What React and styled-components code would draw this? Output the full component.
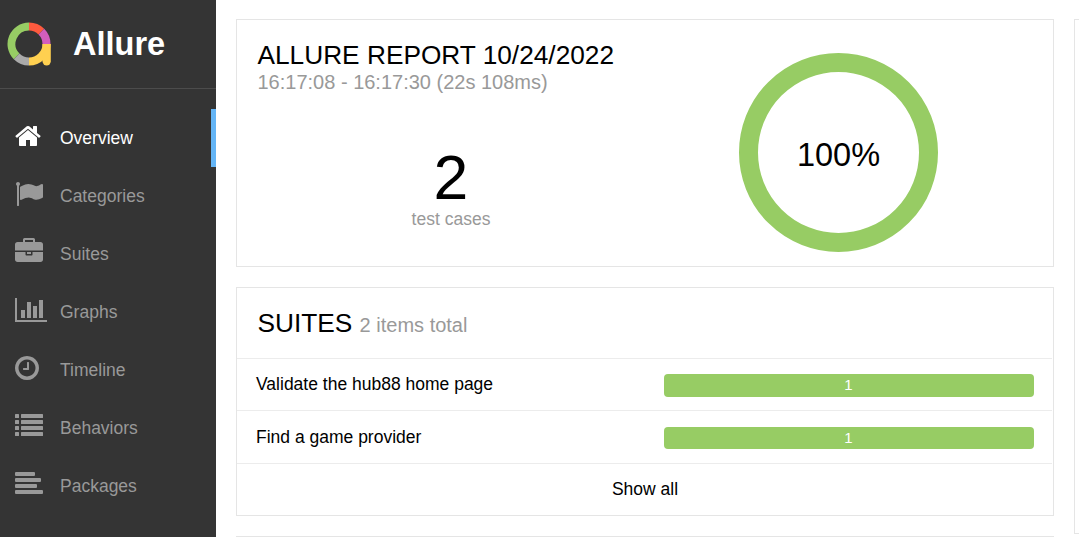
import React from "react";
import styled, { createGlobalStyle } from "styled-components";

const GlobalStyle = createGlobalStyle`
  * { box-sizing: border-box; }
  body {
    margin: 0;
    overflow: hidden;
    background: #fff;
    color: #000;
    font: 17.5px/26px "Liberation Sans", Arial, sans-serif;
  }
`;

const Page = styled.div`
  display: flex;
  height: 537px;
  overflow: hidden;
`;

const Sidebar = styled.aside`
  flex: 0 0 216px;
  background: #343434;
`;

const Brand = styled.div`
  display: flex;
  align-items: center;
  height: 89px;
  padding-left: 7px;
  border-bottom: 1px solid #4c4c4c;
`;

const BrandName = styled.span`
  margin-left: 21px;
  color: #fff;
  font-size: 32.5px;
  font-weight: bold;
  line-height: 40px;
`;

const Nav = styled.nav`
  padding-top: 20px;
`;

const NavItem = styled.a`
  display: flex;
  height: 58px;
  padding: 13px 0 0 15px;
  color: ${(p) => (p.$active ? "#fff" : "#999")};
  border-right: 5px solid ${(p) => (p.$active ? "#64b5f6" : "transparent")};
`;

const NavIcon = styled.svg`
  flex: none;
  width: 32px;
  height: 28px;
  margin-right: 13px;
  fill: currentColor;
`;

const NavLabel = styled.span`
  padding-top: 3px;
`;

const Content = styled.main`
  flex: 1;
  display: flex;
  gap: 20px;
  padding: 19px 0 0 20px;
`;

const Column = styled.div`
  flex: 0 0 818px;
  display: flex;
  flex-direction: column;
  gap: 20px;
`;

const Card = styled.section`
  flex: none;
  height: ${(p) => p.$height}px;
  border: 1px solid #e5e5e5;
  background: #fff;
`;

const SummaryCard = styled(Card)`
  display: flex;
`;

const SummaryInfo = styled.div`
  width: 428px;
  padding: 20px 0 0 20.5px;
`;

const Title = styled.h2`
  margin: 0;
  font-size: 26.25px;
  font-weight: normal;
  line-height: 30px;
  white-space: nowrap;
`;

const Subtitle = styled.span`
  display: ${(p) => (p.$block ? "block" : "inline")};
  color: #999;
  font-size: 20px;
  line-height: 24px;
`;

const Counter = styled.div`
  margin-top: 49px;
  padding-right: 20.5px;
  text-align: center;
  color: #999;
  line-height: 20px;
`;

const CounterValue = styled.div`
  color: #000;
  font-size: 62.5px;
  line-height: 68px;
  margin-bottom: -2px;
`;

const ChartArea = styled.div`
  padding: 33px 0 0 74px;
`;

const SuitesHead = styled.div`
  height: 69.6px;
  padding: 20px 20.5px 0;
`;

const Row = styled.div`
  display: flex;
  align-items: center;
  justify-content: ${(p) => (p.$centered ? "center" : "space-between")};
  height: 52.5px;
  margin-right: 1px;
  padding: 0 18px 0 19px;
  border-top: 1px solid #ececec;
`;

const Bar = styled.div`
  width: 370px;
  height: 22.5px;
  margin-top: 2px;
  padding-right: 1px;
  border-radius: 4px;
  background: #97cc64;
  color: #fff;
  font-size: 15px;
  line-height: 22px;
  text-align: center;
`;

const SideCard = styled(Card)`
  flex: 0 0 400px;
`;

const Logo = () => (
  <svg width="45" height="45" viewBox="7 22 45 45">
    <g fill="none" strokeWidth="8">
      <path d="M29 26.5A17.5 17.5 0 0 0 16.63 56.37" stroke="#97cc64" />
      <path d="M16.63 56.37A17.5 17.5 0 0 0 29 61.5" stroke="#aaa" />
      <path d="M29 26.5A17.5 17.5 0 0 1 41.37 31.63" stroke="#fd5a3e" />
      <path d="M41.37 31.63A17.5 17.5 0 0 1 46.5 44" stroke="#d35ebe" />
      <path d="M46.5 44A17.5 17.5 0 0 1 29 61.5" stroke="#ffd050" />
    </g>
    <path d="M42.5 44H50.8V61.3a4.1 4.1 0 0 1-8.3 0Z" fill="#ffd050" />
  </svg>
);

const Donut = () => (
  <svg width="199" height="199" viewBox="0 0 199 199">
    <circle cx="99.5" cy="99.5" r="90" fill="none" stroke="#97cc64" strokeWidth="19" />
    <text x="99.5" y="112.5" textAnchor="middle" fontSize="32.5">100%</text>
  </svg>
);

const unit = "scale(0.015625)";

const icons = {
  home: (
    <path transform={`${unit} translate(-64 0)`} d="M1472 992v480q0 26-19 45t-45 19h-384v-384h-256v384h-384q-26 0-45-19t-19-45v-480q0-1 .5-3t.5-3l575-474 575 474q1 2 1 6zm223-69l-62 74q-8 9-21 11h-3q-13 0-21-7l-692-577-692 577q-12 8-24 7-13-2-21-11l-62-74q-8-10-7-23.5t11-21.5l719-599q32-26 76-26t76 26l244 204v-195q0-14 9-23t23-9h192q14 0 23 9t9 23v408l219 182q10 8 11 21.5t-7 23.5z" />
  ),
  flag: (
    <path transform={unit} d="M320 256q0 72-64 110v1266q0 13-9.5 22.5t-22.5 9.5h-64q-13 0-22.5-9.5t-9.5-22.5v-1266q-64-38-64-110 0-53 37.5-90.5t90.5-37.5 90.5 37.5 37.5 90.5zm1472 64v763q0 25-12.5 38.5t-39.5 27.5q-215 116-369 116-61 0-123.5-22t-108.5-48-115.5-48-142.5-22q-192 0-464 146-17 9-33 9-26 0-45-19t-19-45v-742q0-32 31-55 21-14 79-43 236-120 421-120 107 0 200 29t219 88q38 19 88 19 54 0 117.5-21t110-47 88-47 54.5-21q26 0 45 19t19 45z" />
  ),
  briefcase: (
    <path transform={unit} d="M640 256h512v-128h-512v128zm1152 640v480q0 66-47 113t-113 47h-1472q-66 0-113-47t-47-113v-480h672v160q0 26 19 45t45 19h320q26 0 45-19t19-45v-160h672zm-768 0v128h-256v-128h256zm768-480v384h-1792v-384q0-66 47-113t113-47h352v-160q0-40 28-68t68-28h576q40 0 68 28t28 68v160h352q66 0 113 47t47 113z" />
  ),
  chart: (
    <path transform={unit} d="M640 896v512h-256v-512h256zm384-512v1024h-256v-1024h256zm1024 1152v128h-2048v-1536h128v1408h1920zm-640-896v768h-256v-768h256zm384-384v1152h-256v-1152h256z" />
  ),
  clock: (
    <path transform={`${unit} translate(-128 0)`} d="M1024 544v448q0 14-9 23t-23 9h-320q-14 0-23-9t-9-23v-64q0-14 9-23t23-9h224v-352q0-14 9-23t23-9h64q14 0 23 9t9 23zm416 352q0-148-73-273t-198-198-273-73-273 73-198 198-73 273 73 273 198 198 273 73 273-73 198-198 73-273zm224 0q0 209-103 385.5t-279.5 279.5-385.5 103-385.5-103-279.5-279.5-103-385.5 103-385.5 279.5-279.5 385.5-103 385.5 103 279.5 279.5 103 385.5z" />
  ),
  list: [2, 8, 14, 20].map((y) => (
    <g key={y}>
      <rect x="0" y={y} width="4" height="4" rx="0.5" />
      <rect x="6" y={y} width="22" height="4" rx="0.5" />
    </g>
  )),
  align: [20, 26, 22, 28].map((w, i) => (
    <rect key={w} x="0" y={2 + i * 6} width={w} height="4" rx="1" />
  )),
};

const navItems = [
  ["Overview", "home"],
  ["Categories", "flag"],
  ["Suites", "briefcase"],
  ["Graphs", "chart"],
  ["Timeline", "clock"],
  ["Behaviors", "list"],
  ["Packages", "align"],
];

const suites = [
  { name: "Validate the hub88 home page", passed: 1 },
  { name: "Find a game provider", passed: 1 },
];

export default function App() {
  return (
    <Page>
      <GlobalStyle />
      <Sidebar>
        <Brand>
          <Logo />
          <BrandName>Allure</BrandName>
        </Brand>
        <Nav>
          {navItems.map(([label, icon]) => (
            <NavItem key={label} $active={label === "Overview"}>
              <NavIcon viewBox="0 0 32 28">{icons[icon]}</NavIcon>
              <NavLabel>{label}</NavLabel>
            </NavItem>
          ))}
        </Nav>
      </Sidebar>
      <Content>
        <Column>
          <SummaryCard $height={248}>
            <SummaryInfo>
              <Title>ALLURE REPORT 10/24/2022</Title>
              <Subtitle $block>16:17:08 - 16:17:30 (22s 108ms)</Subtitle>
              <Counter>
                <CounterValue>2</CounterValue>
                test cases
              </Counter>
            </SummaryInfo>
            <ChartArea>
              <Donut />
            </ChartArea>
          </SummaryCard>
          <Card $height={229}>
            <SuitesHead>
              <Title>
                SUITES <Subtitle>2 items total</Subtitle>
              </Title>
            </SuitesHead>
            {suites.map((s) => (
              <Row key={s.name}>
                <span>{s.name}</span>
                <Bar>{s.passed}</Bar>
              </Row>
            ))}
            <Row $centered>Show all</Row>
          </Card>
          <Card $height={200} />
        </Column>
        <SideCard $height={515} />
      </Content>
    </Page>
  );
}
